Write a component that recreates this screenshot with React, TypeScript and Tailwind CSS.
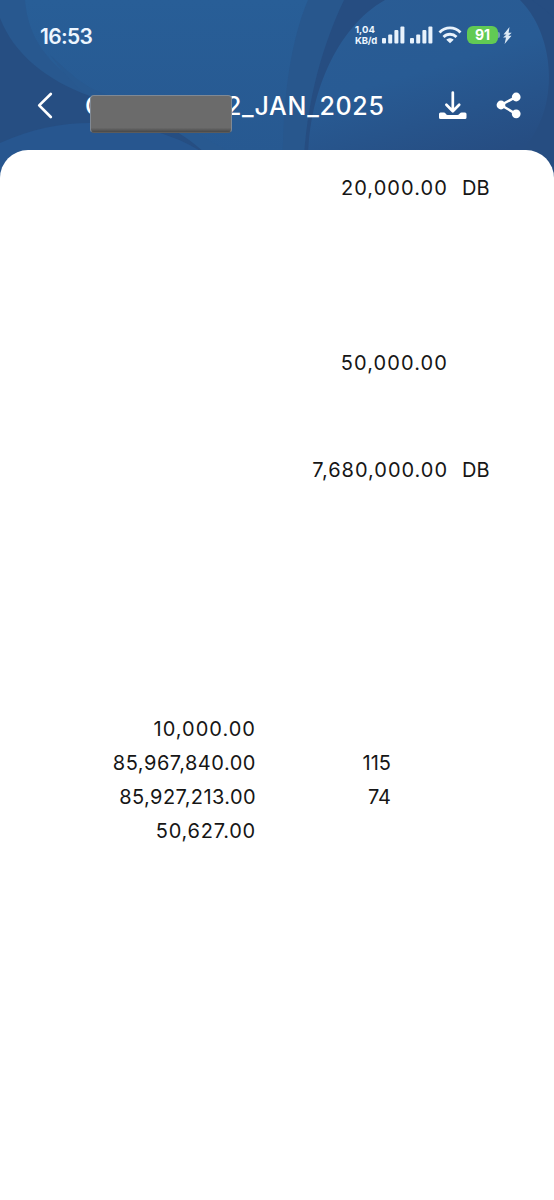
const entries = [
  { amount: "20,000.00", type: "DB", row: "mt-[21px]", text: "tracking-[1.08px]" },
  { amount: "50,000.00", type: "", row: "mt-[141px]", text: "tracking-[1.1px]" },
  { amount: "7,680,000.00", type: "DB", row: "mt-[73px]", text: "tracking-[0.98px]" },
];

const totals = [
  { amount: "10,000.00", count: "", text: "tracking-[1.02px]" },
  { amount: "85,967,840.00", count: "115", text: "tracking-[0.52px]" },
  { amount: "85,927,213.00", count: "74", text: "tracking-[0.4px]" },
  { amount: "50,627.00", count: "", text: "tracking-[0.75px]" },
];

function HeaderBackground() {
  return (
    <svg className="absolute inset-0" width="554" height="180" viewBox="0 0 554 180">
      <defs>
        <linearGradient id="base" x1="0" y1="0" x2="0" y2="1">
          <stop offset="0" stopColor="#285e97" />
          <stop offset="1" stopColor="#275890" />
        </linearGradient>
        <linearGradient id="disc" x1="0" y1="0" x2="0.4" y2="1">
          <stop offset="0" stopColor="#2a5c94" />
          <stop offset="0.5" stopColor="#285b94" />
          <stop offset="1" stopColor="#264d82" />
        </linearGradient>
      </defs>
      <rect width="554" height="180" fill="url(#base)" />
      <path d="M0 0H25C28 38 48 64 84 87C130 114 178 126 204 152V180H0Z" fill="#28588f" />
      <path d="M0 18C14 54 46 80 90 96H110C145 112 180 125 204 152V180H0Z" fill="#264e82" />
      <path d="M90 96C80 92 66 76 50 55C70 72 80 86 110 96C155 110 186 128 230 152H204C180 130 145 112 90 96Z" fill="#285990" />
      <path d="M0 143C55 118 105 120 150 130Q180 138 202 152V180H0Z" fill="#27568f" />
      <path d="M308 0H554V180H283C281 105 290 42 308 0Z" fill="#28578d" />
      <path d="M344 0H554V180H303C304 115 318 55 344 0Z" fill="#264d81" />
      <path d="M309 180C303 108 332 30 385 0H520C544 24 552 62 548 92C544 128 524 150 500 180Z" fill="url(#disc)" />
      <path d="M532 0H554V18Q544 8 532 0Z" fill="#264d81" />
    </svg>
  );
}

function Signal() {
  return (
    <svg width="23" height="18" viewBox="0 0 23 18" fill="#e8f2fc">
      <rect x="0" y="12" width="4" height="5.5" rx="1" />
      <rect x="6.2" y="8.5" width="4" height="9" rx="1" />
      <rect x="12.4" y="4" width="4" height="13.5" rx="1" />
      <rect x="18.4" y="0.5" width="4" height="17" rx="1" />
    </svg>
  );
}

function StatusBar() {
  return (
    <div className="relative flex h-[70px] items-center pl-[40px] text-[#edf6ff]">
      <span className="w-[315px] pt-[2px] text-[21px] font-semibold leading-none tracking-[-0.7px]">16:53</span>
      <div className="flex h-[24px] w-[27px] flex-col justify-center whitespace-nowrap text-[9.5px] font-bold leading-[11.5px]">
        <span>1,04</span>
        <span className="tracking-[-0.2px]">KB/d</span>
      </div>
      <Signal />
      <div className="ml-[5px]"><Signal /></div>
      <svg className="ml-[5px]" width="24" height="18" viewBox="0 0 24 18" fill="none" stroke="#e8f2fc" strokeWidth="2.8">
        <path d="M1.5 6.5C7.5 0.4 16.5 0.4 22.5 6.5" />
        <path d="M5.5 11C9.2 7.3 14.8 7.3 18.5 11" />
        <path d="M8.3 13.7C10.4 11.7 13.6 11.7 15.7 13.7L12 17.3Z" fill="#e8f2fc" stroke="none" />
      </svg>
      <div className="ml-[5px] flex h-[18px] w-[31px] items-center justify-center rounded-[6px] bg-[#61ca54] text-[14px] font-bold leading-none text-white">91</div>
      <div className="h-[6px] w-[2px] rounded-r bg-[#719bb2]" />
      <svg className="ml-[3px]" width="9" height="17" viewBox="0 0 9 17" fill="#dce9f5">
        <path d="M6.5 0L0.5 7.5H3.5L0 10.5H3L1.6 17L8.5 8.8H5.4L8.7 5.7H5.6Z" />
      </svg>
    </div>
  );
}

function TitleBar() {
  return (
    <div className="relative flex h-[80px] items-start pl-[37px] pt-[16px] text-white">
      <svg className="mt-[6px]" width="16" height="27" viewBox="0 0 16 27" fill="none" stroke="currentColor" strokeWidth="2.7" strokeLinecap="round" strokeLinejoin="round">
        <path d="M13.8 2L2.2 13.4L13.8 25" />
      </svg>
      <div className="relative ml-[32px] mt-[6px] flex h-[28px] w-[353px] items-center whitespace-nowrap text-[25px] font-medium leading-none">
        <span className="w-[141px]">C</span>
        <span className="tracking-[0.7px]">2_JAN_2025</span>
        <div className="absolute left-[5px] top-[3px] h-[38px] w-[142px] rounded-[4px] border border-[#808994] border-b-[#5b5b5b] bg-linear-to-b from-[#6b6b6b] from-88% to-[#484848]" />
      </div>
      <svg className="mt-[5px]" width="29" height="29" viewBox="0 0 29 29" fill="none" stroke="currentColor" strokeWidth="2.7" strokeLinecap="round" strokeLinejoin="round">
        <path d="M14.8 1.5V19M8.4 13.8L14.8 20.2L21.2 13.8" />
        <path d="M2.5 21.5H5.7Q7 21.5 7.8 22.8T10 24H19.3Q20.5 24 21.5 22.8T23.8 21.5H27Q28.5 21.5 28.5 23V26.5Q28.5 28 27 28H2.5Q1 28 1 26.5V23Q1 21.5 2.5 21.5Z" fill="currentColor" stroke="none" />
      </svg>
      <svg className="ml-[29px] mt-[6px]" width="26" height="27" viewBox="0 0 26 27" fill="currentColor">
        <path d="M20 5L5 13L20 22" fill="none" stroke="currentColor" strokeWidth="2.5" />
        <circle cx="20.2" cy="5" r="4.4" />
        <circle cx="5" cy="13" r="4.4" />
        <circle cx="20.2" cy="21.8" r="4.4" />
      </svg>
    </div>
  );
}

export default function App() {
  return (
    <div className="relative h-[1200px] w-[554px] overflow-hidden bg-white font-['Inter',sans-serif]">
      <HeaderBackground />
      <StatusBar />
      <TitleBar />
      <main className="relative h-[1050px] overflow-hidden rounded-t-[28px] bg-white text-[20px] text-[#161616]">
        {entries.map((e) => (
          <div key={e.amount} className={`flex h-[34px] items-center ${e.row}`}>
            <span className={`w-[448px] text-right ${e.text}`}>{e.amount}</span>
            <span className="ml-[14px]">{e.type}</span>
          </div>
        ))}
        <div className="mt-[225px]">
          {totals.map((t) => (
            <div key={t.amount} className="flex h-[34px] items-center">
              <span className={`w-[256px] text-right ${t.text}`}>{t.amount}</span>
              <span className="w-[135px] text-right">{t.count}</span>
            </div>
          ))}
        </div>
      </main>
    </div>
  );
}
